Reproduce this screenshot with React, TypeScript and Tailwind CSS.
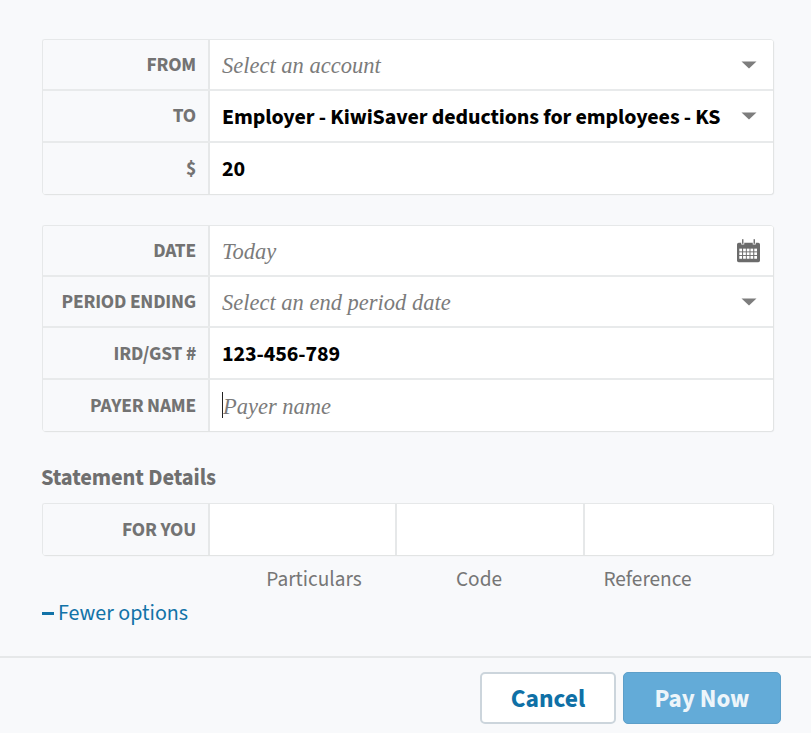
import React from 'react';

const sans = "font-['Source_Sans_3','Noto_Sans',sans-serif]";

const Caret = () => (
  <svg width="16" height="8" viewBox="0 0 16 8" className="shrink-0">
    <path d="M0.5 0.5H15.5L8 7.5Z" fill="#7d7d7d" />
  </svg>
);

const CalendarIcon = () => (
  <svg width="23" height="24" viewBox="1 2 20 20.500" className="shrink-0">
    <path d="M1 6.500A1.500 1.500 0 0 1 2.500 5H4.700V6.500H7.300V5H14.700V6.500H17.300V5H19.500A1.500 1.500 0 0 1 21 6.500V20.500A1.500 1.500 0 0 1 19.500 22H2.500A1.500 1.500 0 0 1 1 20.500Z" fill="#6b6b6b" />
    <rect x="5.400" y="2" width="1.200" height="4" fill="#6b6b6b" />
    <rect x="15.400" y="2" width="1.200" height="4" fill="#6b6b6b" />
    {[10.200, 13.400, 16.600].map((y) =>
      [3, 6.300, 9.500, 12.700, 16].map((x) => (
        <rect key={`${x}-${y}`} x={x} y={y} width="2.400" height="2.400" fill="#fff" />
      )),
    )}
  </svg>
);

const labelCell =
  'flex w-[167px] shrink-0 items-center justify-end whitespace-nowrap border-r-2 border-[#e6e8e9] bg-[#f8f9fb] pr-[12px] pt-[2px] text-[19.500px] font-bold tracking-[-0.2px] text-[#737373]';

interface RowProps {
  label: string;
  last?: boolean;
  children: React.ReactNode;
}

const Row: React.FC<RowProps> = ({ label, last, children }) => (
  <div className={`flex h-[51.300px] ${last ? '' : 'border-b-2 border-[#e8eaeb]'}`}>
    <div className={labelCell}>{label}</div>
    <div className="flex min-w-0 flex-1 items-center justify-between bg-white pl-[12px] pr-[16px]">{children}</div>
  </div>
);

const Placeholder = ({ children }: { children: React.ReactNode }) => (
  <span className="pt-[3px] font-['Liberation_Serif',serif] text-[22.500px] italic leading-none text-[#7b7b7b]">
    {children}
  </span>
);

const Value = ({ children }: { children: React.ReactNode }) => (
  <span className="whitespace-nowrap pt-[3px] text-[22px] font-bold tracking-[-0.1px] text-black">{children}</span>
);

const Card = ({ children }: { children: React.ReactNode }) => (
  <div className="ml-[42px] w-[731px] overflow-hidden rounded-[3px] border-t border-l border-[#e6e8e9] shadow-[1px_1px_1px_#dfe1e2]">
    {children}
  </div>
);

export default function App() {
  return (
    <div className={`flex h-[733px] w-[811px] flex-col overflow-hidden bg-[#f8f9fb] pt-[39px] ${sans}`}>
      <Card>
        <Row label="FROM">
          <Placeholder>Select an account</Placeholder>
          <Caret />
        </Row>
        <Row label="TO">
          <Value>Employer - KiwiSaver deductions for employees - KS</Value>
          <Caret />
        </Row>
        <Row label="$" last>
          <Value>20</Value>
        </Row>
      </Card>

      <div className="mt-[31px]">
        <Card>
          <Row label="DATE">
            <Placeholder>Today</Placeholder>
            <div className="-mr-[3px]">
              <CalendarIcon />
            </div>
          </Row>
          <Row label="PERIOD ENDING">
            <Placeholder>Select an end period date</Placeholder>
            <Caret />
          </Row>
          <Row label="IRD/GST #">
            <Value>123-456-789</Value>
          </Row>
          <Row label="PAYER NAME" last>
            <div className="flex items-center">
              <span className="h-[26px] w-px bg-[#222]" />
              <Placeholder>Payer name</Placeholder>
            </div>
          </Row>
        </Card>
      </div>

      <h2 className="ml-[41px] mt-[32px] text-[22.500px] font-bold leading-[30px] tracking-[-0.1px] text-[#6f6f6f]">
        Statement Details
      </h2>

      <div className="mt-[10px]">
        <Card>
          <div className="flex h-[51.300px]">
            <div className={labelCell}>FOR YOU</div>
            <div className="w-[187px] border-r-2 border-[#e6e8e9] bg-white" />
            <div className="w-[188px] border-r-2 border-[#e6e8e9] bg-white" />
            <div className="flex-1 bg-white" />
          </div>
        </Card>
      </div>

      <div className="ml-[209px] mt-[10px] flex w-[564px] text-[21.300px] leading-[30px] text-[#767676]">
        <span className="w-[210px] text-center">Particulars</span>
        <span className="w-[120px] text-center">Code</span>
        <span className="w-[217px] text-center">Reference</span>
      </div>

      <div className="ml-[42px] mt-[3px] flex items-center text-[22px] leading-[30px] text-[#1273a8]">
        <span className="mr-[4px] h-[3px] w-[12px] bg-[#1273a8]" />
        Fewer options
      </div>

      <div className="mt-[28px] flex flex-1 justify-end gap-[7px] border-t-2 border-[#e6e8e9] pr-[30px] pt-[14px]">
        <button className="h-[52px] w-[136px] rounded-[5px] border-2 border-[#ccd5dc] bg-white pt-[2px] text-[25.500px] font-bold text-[#0f70a6]">
          Cancel
        </button>
        <button className="h-[52px] w-[158px] rounded-[5px] border border-[#5d9fc9] bg-[#63abd8] pt-[2px] text-[25px] font-bold text-[#edf5fa]">
          Pay Now
        </button>
      </div>
    </div>
  );
}
